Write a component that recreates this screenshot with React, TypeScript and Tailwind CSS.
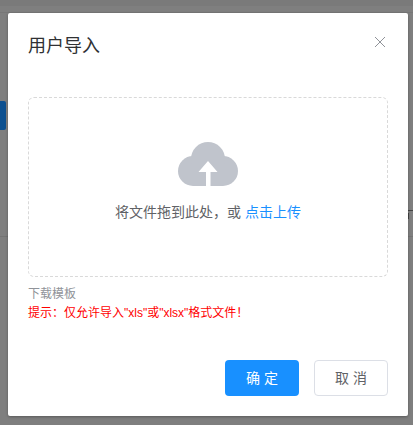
export default function App() {
  return (
    <div className="relative h-[425px] w-[413px] overflow-hidden bg-[#7f7f7f] pt-[13px] pl-[8px] font-['Liberation_Sans','Noto_Sans_CJK_SC',sans-serif]">
      <div className="absolute left-0 top-0 h-[6px] w-full bg-[#7a7a7a]" />
      <div className="absolute left-0 top-[12px] h-px w-full bg-[#777777]" />
      <div className="absolute left-0 top-[101px] h-[29px] w-[6px] rounded-r-[2px] bg-[#0c5090]" />
      <div className="absolute left-0 top-[236px] h-px w-full bg-[#747474]" />
      <div className="absolute left-[408px] top-[210px] h-px w-[5px] bg-[#444444]" />
      <div className="absolute left-[408px] top-[213px] h-[6px] w-px bg-[#444444]" />
      <div className="relative flex h-[403px] w-[400px] flex-col rounded-[2px] bg-white shadow-[0_1px_3px_rgba(0,0,0,0.3)]">
        <div className="flex items-start justify-between pl-[20px] pr-[23px] pt-[21px]">
          <span className="text-[18px] leading-[24px] text-[#303133]">用户导入</span>
          <svg width="10" height="10" viewBox="0 0 10 10" className="mt-[3px]" fill="none" stroke="#909399" strokeWidth="1">
            <path d="M0 0 L10 10 M10 0 L0 10" />
          </svg>
        </div>
        <div className="mt-[39px] px-[20px]">
          <div className="flex h-[180px] w-[360px] flex-col items-center rounded-[6px] border border-dashed border-[#d9d9d9]">
            <svg width="60" height="44" viewBox="0 0 60 44" className="mt-[44px]" fill="#c0c4cc">
              <circle cx="15" cy="29" r="15" />
              <circle cx="45" cy="29" r="15" />
              <circle cx="30" cy="17" r="17" />
              <rect x="15" y="20" width="30" height="24" />
              <polygon fill="#ffffff" points="30,19 39.5,30 32.5,30 32.5,44 28,44 28,30 20.5,30" />
            </svg>
            <div className="mt-[16px] text-[14px] leading-[20px] text-[#606266]">
              将文件拖到此处，或 <span className="text-[#1890ff]">点击上传</span>
            </div>
          </div>
          <div className="mt-[9px] text-[12px] leading-[16px] text-[#909399]">下载模板</div>
          <div className="mt-[3px] text-[12px] leading-[16px] text-[#ff0000]">提示：仅允许导入"xls"或"xlsx"格式文件！</div>
        </div>
        <div className="mt-auto flex justify-end gap-[15px] pb-[20px] pr-[20px]">
          <button className="h-[36px] w-[74px] rounded-[4px] bg-[#1890ff] text-[14px] text-white">确 定</button>
          <button className="h-[36px] w-[74px] rounded-[4px] border border-[#dcdfe6] bg-white text-[14px] text-[#606266]">取 消</button>
        </div>
      </div>
    </div>
  );
}
